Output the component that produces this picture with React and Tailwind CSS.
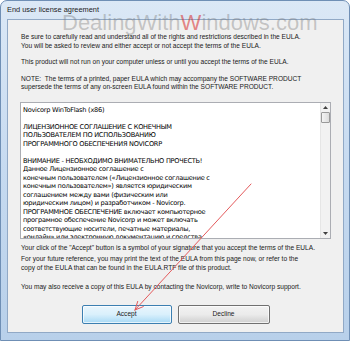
import React from "react";

const eulaLines = [
  "Novicorp WinToFlash (x86)",
  "",
  "ЛИЦЕНЗИОННОЕ СОГЛАШЕНИЕ С КОНЕЧНЫМ",
  "ПОЛЬЗОВАТЕЛЕМ ПО ИСПОЛЬЗОВАНИЮ",
  "ПРОГРАММНОГО ОБЕСПЕЧЕНИЯ NOVICORP",
  "",
  "ВНИМАНИЕ - НЕОБХОДИМО ВНИМАТЕЛЬНО ПРОЧЕСТЬ!",
  "Данное Лицензионное соглашение с",
  "конечным пользователем («Лицензионное соглашение с",
  "конечным пользователем») является юридическим",
  "соглашением между вами (физическим или",
  "юридическим лицом) и разработчиком - Novicorp.",
  "ПРОГРАММНОЕ ОБЕСПЕЧЕНИЕ включает компьютерное",
  "програмное обеспечение Novicorp и может включать",
  "соответствующие носители, печатные материалы,",
  "«онлайн» или электронную документацию и средства",
];

export default function App() {
  return (
    <div className="relative w-[350px] h-[341px] overflow-hidden bg-white font-['Liberation_Sans',Arial,sans-serif]">
      {/* window frame */}
      <div className="w-[350px] h-[341px] flex flex-col rounded-t-[7px] border border-[#6f8fb5] bg-gradient-to-b from-[#dbe8f6] via-[#c6daf0] to-[#b8d0ea]">
        <div className="h-[18px] flex items-center pl-[6px] text-[7.4px] text-[#1b1b1b] shrink-0">
          End user license agreement
        </div>
        <div className="flex-1 ml-[6px] mr-[5px] mb-[7px] border border-[#91a9c6] bg-[#f0f0f0] flex flex-col pl-[12px] pr-[12px] pt-[13px] text-[6.6px] leading-[8.5px] text-[#1a1a1a]">
          <div className="pl-[1px]">
            <div>Be sure to carefully read and understand all of the rights and restrictions described in the EULA.</div>
            <div>You will be asked to review and either accept or not accept the terms of the EULA.</div>
          </div>
          <div className="pl-[1px] mt-[8px]">
            This product will not run on your computer unless or until you accept the terms of the EULA.
          </div>
          <div className="pl-[1px] mt-[8px]">
            <div>NOTE:&nbsp; The terms of a printed, paper EULA which may accompany the SOFTWARE PRODUCT</div>
            <div>supersede the terms of any on-screen EULA found within the SOFTWARE PRODUCT.</div>
          </div>
          {/* text box */}
          <div className="mt-[10px] h-[137px] shrink-0 border border-[#abadb3] bg-white flex overflow-hidden">
            <div className="flex-1 pl-[2px] pt-[3px] overflow-hidden text-black text-[6.6px] leading-[8.5px] font-['DejaVu_Sans',Verdana,sans-serif] tracking-[-0.25px]">
              {eulaLines.map((l, i) => (
                <div key={i} className="whitespace-pre h-[8.5px]">{l || " "}</div>
              ))}
            </div>
            <div className="w-[10px] shrink-0 bg-[#f2f2f2] border-l border-[#e6e6e6] flex flex-col items-center">
              <div className="h-[9px] w-full flex items-center justify-center">
                <svg width="5" height="3" viewBox="0 0 5 3"><path d="M0 3 L2.5 0 L5 3 Z" fill="#404040" /></svg>
              </div>
              <div className="w-[9px] h-[11px] rounded-[1px] border border-[#9a9a9a] bg-gradient-to-r from-[#f4f4f4] to-[#dcdcdc]" />
              <div className="flex-1" />
              <div className="h-[9px] w-full flex items-center justify-center">
                <svg width="5" height="3" viewBox="0 0 5 3"><path d="M0 0 L2.5 3 L5 0 Z" fill="#404040" /></svg>
              </div>
            </div>
          </div>
          <div className="pl-[1px] mt-[5px]">
            Your click of the "Accept" button is a symbol of your signature that you accept the terms of the EULA.
          </div>
          <div className="pl-[1px] mt-[3px]">
            <div>For your future reference, you may print the text of the EULA from this page now, or refer to the</div>
            <div>copy of the EULA that can be found in the EULA.RTF file of this product.</div>
          </div>
          <div className="pl-[1px] mt-[11px]">
            You may also receive a copy of this EULA by contacting the Novicorp, write to Novicorp support.
          </div>
          <div className="mt-[13px] flex justify-center gap-[6px]">
            <div className="w-[90px] h-[19px] rounded-[2px] border border-[#3c7fb1] bg-gradient-to-b from-[#eaf6fd] via-[#d9f0fc] to-[#a7d9f5] flex items-center justify-center shadow-[inset_0_0_0_1px_rgba(255,255,255,0.7)]">
              Accept
            </div>
            <div className="w-[92px] h-[19px] rounded-[2px] border border-[#707070] bg-gradient-to-b from-[#f2f2f2] via-[#ebebeb] to-[#cfcfcf] flex items-center justify-center shadow-[inset_0_0_0_1px_rgba(255,255,255,0.7)]">
              Decline
            </div>
          </div>
        </div>
      </div>

      {/* watermark */}
      <div className="absolute left-[62px] top-[10px] text-[22px] leading-[26px] text-[rgba(120,120,120,0.38)] whitespace-nowrap pointer-events-none">
        DealingWith<span className="text-[rgba(215,40,40,0.55)]">W</span>indows.com
      </div>

      {/* red arrow */}
      <svg className="absolute left-0 top-0 pointer-events-none" width="350" height="341" viewBox="0 0 350 341">
        <g stroke="#e45a5c" strokeWidth="1" fill="none" strokeLinecap="round">
          <line x1="251" y1="184" x2="135" y2="310" />
          <line x1="135" y1="310" x2="143.3" y2="306.6" />
          <line x1="135" y1="310" x2="137.7" y2="301.4" />
        </g>
      </svg>
    </div>
  );
}
